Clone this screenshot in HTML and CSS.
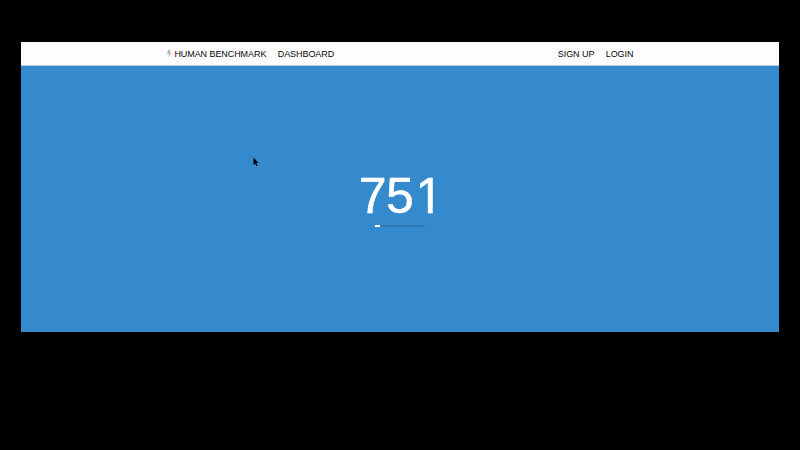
FILE: index.html
```html
<!DOCTYPE html>
<html lang="en">
<head>
<meta charset="utf-8">
<title>Human Benchmark</title>
<link rel="stylesheet" href="styles.css">
</head>
<body>
<div class="page">
  <header class="navbar">
    <nav class="nav-left">
      <a class="brand"><svg class="bolt" viewBox="0 0 6 8"><path d="M2 0H4.5L4 2.8H5.5L2.4 7.5L3 4.5H1.2Z"/></svg>HUMAN BENCHMARK</a>
      <a>DASHBOARD</a>
    </nav>
    <nav class="nav-right"><a>SIGN UP</a><a>LOGIN</a></nav>
  </header>
  <main class="stage">
    <div class="number">75<span class="one">1</span></div>
    <div class="timer"><div class="timer-fill"></div></div>
  </main>
</div>
<svg class="cursor" viewBox="0 0 6 10"><path d="M0.5 0.5V8L2.2 6.5L3.4 9.2L4.6 8.6L3.5 6H5.6Z"/></svg>
</body>
</html>
```
FILE: styles.css
```css
body {
  display: flow-root;
  margin: 0;
  height: 450px;
  overflow: hidden;
  background: #000;
  font-family: "Liberation Sans", Arial, sans-serif;
}
.page {
  width: 758px;
  height: 290px;
  margin: 42px 0 0 21px;
  display: flex;
  flex-direction: column;
}
.navbar {
  box-sizing: border-box;
  height: 24px;
  padding: 0 145.6px 0 144.7px;
  display: flex;
  justify-content: space-between;
  align-items: center;
  background: #fdfdfd;
  border-bottom: 1px solid #b5ccdc;
  color: #080808;
  font-size: 9px;
  letter-spacing: -0.07px;
}
.nav-left, .nav-right { display: flex; gap: 11.4px; transform: scaleY(1.1); }
.brand { display: flex; align-items: center; }
.bolt { width: 6px; height: 8px; margin-right: 2.7px; fill: #bbb; }
.stage {
  flex: 1;
  display: flex;
  flex-direction: column;
  align-items: center;
  background: #348acd;
}
.number {
  margin: 102px 0.6px 0 0;
  height: 57px;
  line-height: 57px;
  font-size: 50px;
  letter-spacing: -0.5px;
  color: #fff;
  -webkit-text-stroke: 0.5px #fff;
}
/* Trims the foot of the numeral so that only its stem reaches the baseline. */
.one {
  display: inline-block;
  margin: 0 -2.2px 0 2.2px;
  clip-path: polygon(0 0, 100% 0, 100% 40px, 17.2px 40px, 17.2px 57px, 12.3px 57px, 12.3px 40px, 0 40px);
}
.timer { width: 50px; height: 2px; background: #2d7ab6; }
.timer-fill { width: 5px; height: 2px; background: #fff; }
.cursor {
  position: absolute;
  left: 253px;
  top: 157px;
  width: 6px;
  height: 10px;
  fill: #000;
}
```
